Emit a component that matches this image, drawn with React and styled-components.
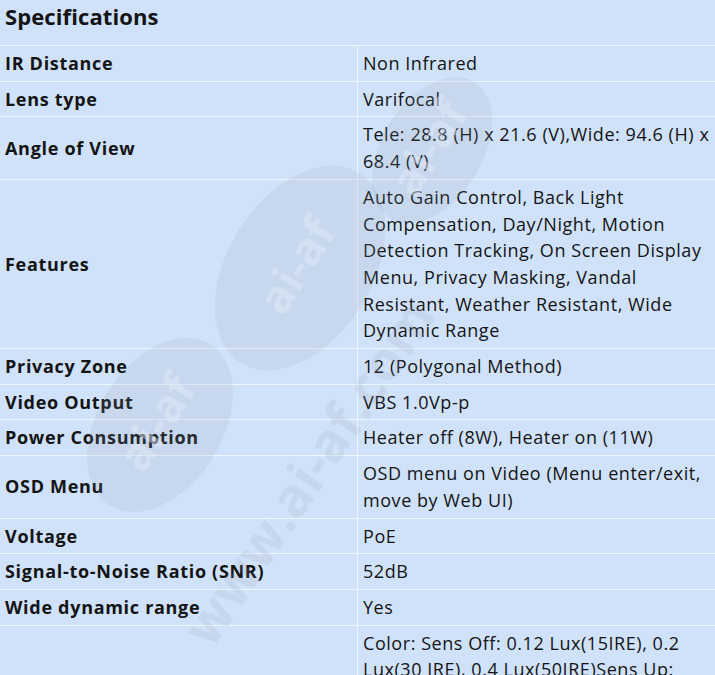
import styled, { createGlobalStyle } from "styled-components";

const GlobalStyle = createGlobalStyle`
  html, body {
    margin: 0;
    padding: 0;
    background: #d0e2f9;
  }
  body {
    font-family: "Open Sans", "Noto Sans", sans-serif;
    color: #141414;
    overflow: hidden;
  }
`;

const specs = [
  { label: "IR Distance", value: "Non Infrared" },
  { label: "Lens type", value: "Varifocal" },
  { label: "Angle of View", value: "Tele: 28.8 (H) x 21.6 (V),Wide: 94.6 (H) x\n68.4 (V)" },
  {
    label: "Features",
    value:
      "Auto Gain Control, Back Light\nCompensation, Day/Night, Motion\nDetection Tracking, On Screen Display\nMenu, Privacy Masking, Vandal\nResistant, Weather Resistant, Wide\nDynamic Range",
  },
  { label: "Privacy Zone", value: "12 (Polygonal Method)" },
  { label: "Video Output", value: "VBS 1.0Vp-p" },
  { label: "Power Consumption", value: "Heater off (8W), Heater on (11W)" },
  { label: "OSD Menu", value: "OSD menu on Video (Menu enter/exit,\nmove by Web UI)" },
  { label: "Voltage", value: "PoE" },
  { label: "Signal-to-Noise Ratio (SNR)", value: "52dB" },
  { label: "Wide dynamic range", value: "Yes" },
  {
    label: "Minimum Illumination",
    value:
      "Color: Sens Off: 0.12 Lux(15IRE), 0.2\nLux(30 IRE), 0.4 Lux(50IRE)Sens Up:\n0.004 Lux(15IRE), 0.008 Lux(30IRE),\n0.016 Lux(50IRE)B/W: Sens Off: 0.012\nLux(15IRE), 0.02 Lux(30IRE), 0.04\nLux(50IRE)",
  },
];

const Page = styled.div`
  position: relative;
  width: 715px;
  height: 675px;
  overflow: hidden;
  background: #d0e2f9;
`;

const Title = styled.h2`
  margin: 0;
  height: 46px;
  padding: 1px 5px 0;
  box-sizing: border-box;
  font-size: 22px;
  font-weight: 700;
  letter-spacing: 0.1px;
  line-height: 30px;
  border-bottom: 1px solid #eef5fe;
`;

const Table = styled.div`
  display: grid;
  grid-template-columns: 358px 1fr;
`;

const Label = styled.div`
  display: flex;
  align-items: center;
  padding: 4px 5px;
  font-size: 18px;
  font-weight: 700;
  letter-spacing: 0.7px;
  line-height: 26.7px;
  white-space: nowrap;
  border-right: 1px solid #eef5fe;
  border-bottom: 1px solid #eef5fe;
`;

const Value = styled.div`
  padding: 4px 5px;
  font-size: 18px;
  letter-spacing: 0.55px;
  line-height: 26.7px;
  white-space: pre;
  overflow: hidden;
  border-bottom: 1px solid #eef5fe;
`;

const Watermark = styled.svg`
  position: absolute;
  inset: 0;
  pointer-events: none;
`;

const Mark = ({ x, y, rot, text, rx, ry }) => (
  <g transform={`translate(${x} ${y}) rotate(${rot})`}>
    <ellipse rx={rx} ry={ry} fill="#8f9bb0" opacity="0.15" />
    <text
      textAnchor="middle"
      dominantBaseline="middle"
      fontFamily="'Open Sans', sans-serif"
      fontWeight="700"
      fontSize="46"
      fill="#e6eefb"
      opacity="0.45"
    >
      {text}
    </text>
  </g>
);

export default function App() {
  return (
    <>
      <GlobalStyle />
      <Page>
        <Title>Specifications</Title>
        <Table>
          {specs.map((s) => (
            <>
              <Label key={s.label + "l"}>{s.label}</Label>
              <Value key={s.label + "v"}>{s.value}</Value>
            </>
          ))}
        </Table>
        <Watermark width="715" height="675" viewBox="0 0 715 675">
          <Mark x={300} y={268} rot={-58} text="ai-af" rx={112} ry={72} />
          <Mark x={160} y={425} rot={-58} text="ai-af" rx={95} ry={62} />
          <Mark x={432} y={150} rot={-58} text="ai-af" rx={80} ry={50} />
          <text
            transform="translate(212 650) rotate(-56)"
            fontFamily="'Open Sans', sans-serif"
            fontWeight="700"
            fontSize="54"
            fill="#8f9bb0"
            opacity="0.15"
          >
            www.ai-af.com
          </text>
        </Watermark>
      </Page>
    </>
  );
}
